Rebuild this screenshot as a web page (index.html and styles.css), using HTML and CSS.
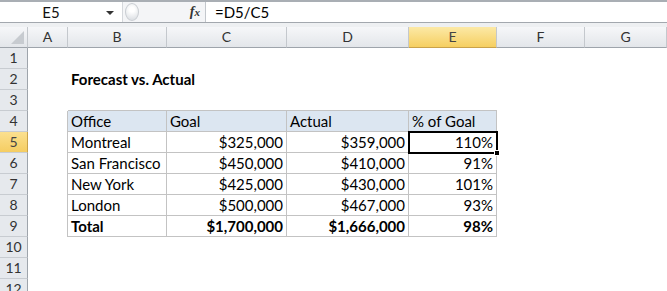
FILE: index.html
```html
<!DOCTYPE html>
<html lang="en">
<head>
    <meta charset="UTF-8">
    <title>Forecast vs. Actual</title>
    <link rel="stylesheet" href="styles.css">
</head>
<body>

    <div class="formula-bar">
        <div class="name-box">
            <span class="cell-ref">E5</span>
            <span class="arrow"></span>
        </div>
        <div class="fx-area">
            <span class="grip"></span>
            <span class="fx">f<i>x</i></span>
        </div>
        <div class="formula">=D5/C5</div>
    </div>
    <div class="gap"></div>

    <div class="sheet">
        <div class="row col-head">
            <div class="corner"><span class="tri"></span></div>
            <div>A</div><div>B</div><div>C</div><div>D</div>
            <div class="on">E</div><div>F</div><div>G</div>
        </div>
        <div class="row">
            <div class="rh">1</div>
            <div></div><div></div><div></div><div></div><div></div><div></div><div></div>
        </div>
        <div class="row">
            <div class="rh">2</div>
            <div></div><div class="c title">Forecast vs. Actual</div><div></div><div></div><div></div><div></div><div></div>
        </div>
        <div class="row">
            <div class="rh">3</div>
            <div></div><div class="above"></div><div class="above"></div><div class="above"></div><div class="above"></div><div></div><div></div>
        </div>
        <div class="row">
            <div class="rh">4</div>
            <div class="before"></div>
            <div class="c t th">Office</div>
            <div class="c t th">Goal</div>
            <div class="c t th">Actual</div>
            <div class="c t th">% of Goal</div>
            <div></div><div></div>
        </div>
        <div class="row">
            <div class="rh on">5</div>
            <div class="before"></div>
            <div class="c t">Montreal</div>
            <div class="c t num">$325,000</div>
            <div class="c t num">$359,000</div>
            <div class="c t num active">110%<span class="handle"></span></div>
            <div></div><div></div>
        </div>
        <div class="row">
            <div class="rh">6</div>
            <div class="before"></div>
            <div class="c t">San Francisco</div>
            <div class="c t num">$450,000</div>
            <div class="c t num">$410,000</div>
            <div class="c t num">91%</div>
            <div></div><div></div>
        </div>
        <div class="row">
            <div class="rh">7</div>
            <div class="before"></div>
            <div class="c t">New York</div>
            <div class="c t num">$425,000</div>
            <div class="c t num">$430,000</div>
            <div class="c t num">101%</div>
            <div></div><div></div>
        </div>
        <div class="row">
            <div class="rh">8</div>
            <div class="before"></div>
            <div class="c t">London</div>
            <div class="c t num">$500,000</div>
            <div class="c t num">$467,000</div>
            <div class="c t num">93%</div>
            <div></div><div></div>
        </div>
        <div class="row">
            <div class="rh">9</div>
            <div class="before"></div>
            <div class="c t bold">Total</div>
            <div class="c t num bold">$1,700,000</div>
            <div class="c t num bold">$1,666,000</div>
            <div class="c t num bold">98%</div>
            <div></div><div></div>
        </div>
        <div class="row">
            <div class="rh">10</div>
            <div></div><div></div><div></div><div></div><div></div><div></div><div></div>
        </div>
        <div class="row">
            <div class="rh">11</div>
            <div></div><div></div><div></div><div></div><div></div><div></div><div></div>
        </div>
        <div class="row">
            <div class="rh">12</div>
            <div></div><div></div><div></div><div></div><div></div><div></div><div></div>
        </div>
    </div>

</body>
</html>
```

FILE: styles.css
```css
* {
    box-sizing: border-box;
}
body {
    margin: 0;
    width: 667px;
    height: 291px;
    overflow: hidden;
    background-color: #fff;
    font-family: Lato, "Open Sans", sans-serif;
    font-size: 15px;
    color: #000;
}

/* formula bar */
.formula-bar {
    display: flex;
    height: 23px;
    border-top: 2px solid #a9aeb4;
    border-bottom: 1px solid #a3a8ae;
}
.name-box {
    width: 122px;
    display: flex;
    align-items: center;
    background-color: #fff;
    position: relative;
}
.cell-ref {
    flex: 1;
    text-align: center;
    padding-right: 20px;
    color: #111;
}
.arrow {
    position: absolute;
    right: 8px;
    top: 9px;
    border-left: 4px solid transparent;
    border-right: 4px solid transparent;
    border-top: 4px solid #333;
}
.fx-area {
    width: 84px;
    display: flex;
    align-items: center;
    justify-content: space-between;
    background-color: #f4f5f7;
    border-left: 1px solid #d5d8dc;
    border-right: 1px solid #c3c7cc;
    padding: 0 5px 0 2px;
}
.grip {
    width: 14px;
    height: 18px;
    border-radius: 50%;
    border: 1px solid #c9cdd2;
    background: radial-gradient(circle at 50% 35%, #fff 20%, #dfe2e6 80%);
}
.fx {
    font-family: "Liberation Serif", serif;
    font-style: italic;
    font-weight: bold;
    font-size: 14px;
    color: #333;
}
.fx i {
    font-size: 11px;
}
.formula {
    flex: 1;
    padding-left: 9px;
    line-height: 20px;
    background-color: #fff;
}
.gap {
    height: 4px;
    background-color: #eef0f2;
}

/* grid */
.row {
    display: grid;
    grid-template-columns: 28px 40px 99px 120px 122px 88px 88px 82px;
    height: 21px;
}
.row > div {
    line-height: 20px;
    white-space: nowrap;
    overflow: hidden;
}
.col-head > div {
    background: linear-gradient(#f6f7f9, #e3e6ea);
    border-right: 1px solid #c4c8cd;
    border-bottom: 1px solid #9ea4ab;
    text-align: center;
    color: #333;
    font-size: 14px;
}
.col-head > div.on {
    background: linear-gradient(#fce9a6, #f6cf61);
    border-bottom-color: #c9a24a;
    color: #444;
}
.corner {
    position: relative;
}
.tri {
    position: absolute;
    right: 3px;
    bottom: 3px;
    border-left: 13px solid transparent;
    border-bottom: 13px solid #c7cbd0;
}
.rh {
    background-color: #e6e9ed;
    border-right: 1px solid #9ea4ab;
    border-bottom: 1px solid #c8ccd1;
    text-align: center;
    color: #333;
    font-size: 14px;
}
.rh.on {
    background: linear-gradient(#fbe08f, #f5cd62);
    border-right-color: #c9a24a;
    color: #444;
}

/* data cells */
.c {
    padding: 0 3px 0 3px;
}
.title {
    font-weight: bold;
    overflow: visible !important;
}
.above {
    border-bottom: 1px solid #c3c3c3;
}
.before {
    border-right: 1px solid #c3c3c3;
}
.t {
    border-right: 1px solid #c3c3c3;
    border-bottom: 1px solid #c3c3c3;
}
.th {
    background-color: #dce6f1;
}
.num {
    text-align: right;
}
.bold {
    font-weight: bold;
}
.active {
    position: relative;
    overflow: visible !important;
    outline: 2px solid #000;
    outline-offset: -1px;
}
.handle {
    position: absolute;
    right: -4px;
    bottom: -4px;
    width: 6px;
    height: 6px;
    background-color: #000;
    border: 1px solid #fff;
}
```
